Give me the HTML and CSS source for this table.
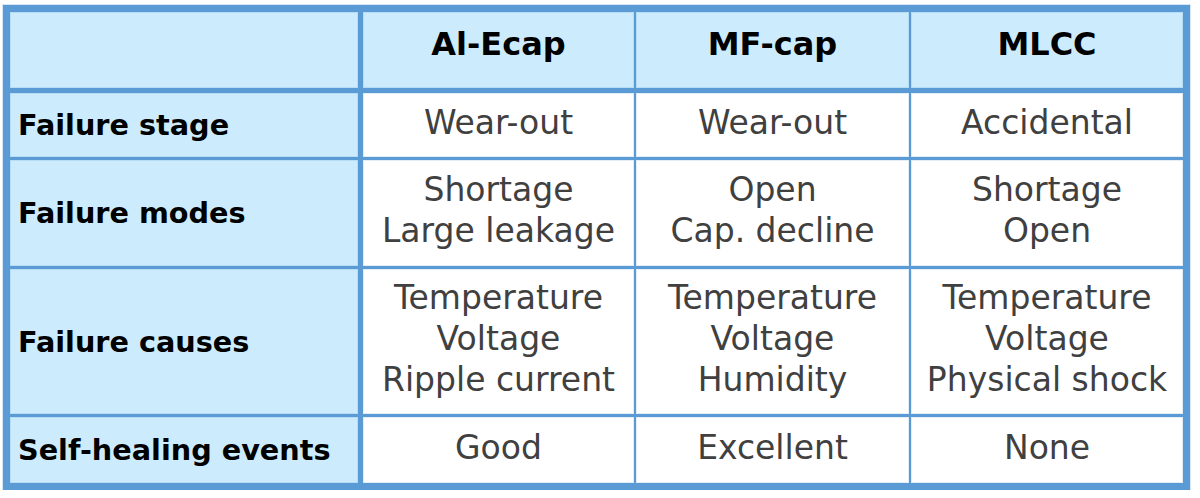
FILE: index.html
```html
<!DOCTYPE html>
<html>
<head>
<meta charset="utf-8">
<link rel="stylesheet" href="styles.css">
</head>
<body>
<div class="table">
  <div class="cell head corner"></div>
  <div class="cell head colhead">Al-Ecap</div>
  <div class="cell head colhead">MF-cap</div>
  <div class="cell head colhead">MLCC</div>

  <div class="cell label">Failure stage</div>
  <div class="cell val">Wear-out</div>
  <div class="cell val">Wear-out</div>
  <div class="cell val">Accidental</div>

  <div class="cell label">Failure modes</div>
  <div class="cell val">Shortage<br>Large leakage</div>
  <div class="cell val">Open<br>Cap. decline</div>
  <div class="cell val">Shortage<br>Open</div>

  <div class="cell label">Failure causes</div>
  <div class="cell val">Temperature<br>Voltage<br>Ripple current</div>
  <div class="cell val">Temperature<br>Voltage<br>Humidity</div>
  <div class="cell val">Temperature<br>Voltage<br>Physical shock</div>

  <div class="cell label">Self-healing events</div>
  <div class="cell val">Good</div>
  <div class="cell val">Excellent</div>
  <div class="cell val">None</div>
</div>
</body>
</html>
```
FILE: styles.css
```css
html, body {
  margin: 0;
  padding: 0;
  background: #ffffff;
}

body {
  padding: 5px 0 0 3px;
  font-family: "DejaVu Sans", Verdana, sans-serif;
}

.table {
  display: grid;
  width: 1187px;
  box-sizing: border-box;
  grid-template-columns: 351px 271px 273px 272px;
  grid-template-rows: 78px 64px 106px 145px 66px;
  column-gap: 2px;
  row-gap: 3px;
  padding: 7px;
  background: #5b9bd5;
  box-shadow: 0 0 0 1px rgba(91, 155, 213, 0.25);
}

.cell {
  display: flex;
  align-items: center;
  justify-content: center;
  text-align: center;
  background: #ffffff;
  box-shadow: inset 0 0 0 1px rgba(91, 155, 213, 0.18);
}

.head,
.label {
  background: #ccecfd;
}

.corner,
.label {
  margin-right: 3px;
}

.head {
  margin-bottom: 2px;
}

.colhead {
  font-weight: bold;
  font-size: 32px;
  color: #000000;
  padding-bottom: 12px;
}

.label {
  justify-content: flex-start;
  text-align: left;
  padding-left: 8px;
  font-weight: bold;
  font-size: 28.7px;
  color: #000000;
}

.val {
  font-size: 33px;
  line-height: 41px;
  color: #404040;
  padding-bottom: 6px;
}
```
